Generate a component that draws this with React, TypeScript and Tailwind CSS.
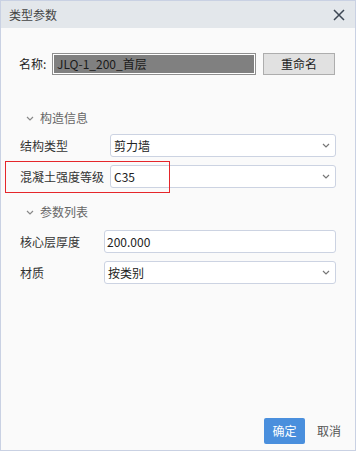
import React from "react";

const font = { fontFamily: '"Noto Sans CJK SC", "Noto Sans", sans-serif' };

function Chevron({ className = "" }: { className?: string }) {
  return (
    <svg width="8" height="5" viewBox="0 0 8 5" className={className} fill="none">
      <path d="M1 1l3 3 3-3" stroke="currentColor" strokeWidth="1.2" />
    </svg>
  );
}

function Select({ value, left }: { value: string; left: string }) {
  return (
    <div
      className={`${left} flex-1 h-[23px] bg-white border border-[#ccd3e2] rounded-[3px] flex items-center justify-between pl-[3px] pr-[5px] text-[12px] text-[#222]`}
    >
      <span>{value}</span>
      <Chevron className="text-[#777]" />
    </div>
  );
}

function SectionHeader({ title }: { title: string }) {
  return (
    <div className="flex items-center h-[16px] pl-[25px] text-[12px] text-[#666]">
      <Chevron className="text-[#888] mr-[6px]" />
      <span>{title}</span>
    </div>
  );
}

export default function App() {
  return (
    <div
      style={font}
      className="w-[356px] h-[451px] border border-[#c9d1e3] flex flex-col bg-[#fafafa]"
    >
      {/* title bar */}
      <div className="h-[27px] bg-[#e3e7eb] flex items-center justify-between pl-[8px] pr-[10px]">
        <span className="text-[12px] text-[#444]">类型参数</span>
        <svg width="12" height="12" viewBox="0 0 12 12" fill="none">
          <path d="M1 1l10 10M11 1L1 11" stroke="#3d4754" strokeWidth="1.5" />
        </svg>
      </div>

      <div className="flex-1 flex flex-col">
        {/* name row */}
        <div className="flex items-center mt-[25px] pl-[18px]">
          <span className="w-[33px] text-[12px] text-[#222]">名称:</span>
          <div className="w-[204px] h-[22px] bg-[#808080] border border-[#8f8f8f] shadow-[inset_0_0_0_1px_#ffffff] flex items-center pl-[4px] text-[12px] text-[#1a1a1a]">
            JLQ-1_200_首层
          </div>
          <button className="ml-[7px] w-[72px] h-[22px] bg-[#e1e1e1] border border-[#adadad] text-[12px] text-[#222]">
            重命名
          </button>
        </div>

        <div className="mt-[35px]">
          <SectionHeader title="构造信息" />
        </div>

        <div className="flex items-center mt-[8px] pl-[19px] pr-[19px]">
          <span className="w-[90px] text-[12px] text-[#333]">结构类型</span>
          <Select value="剪力墙" left="" />
        </div>

        <div className="relative flex items-center mt-[8px] pl-[19px] pr-[19px]">
          <span className="w-[90px] text-[12px] text-[#333]">混凝土强度等级</span>
          <Select value="C35" left="" />
          <div className="absolute left-[4px] top-[-4px] w-[165px] h-[32px] border border-[#e5262b] pointer-events-none" />
        </div>

        <div className="mt-[16px]">
          <SectionHeader title="参数列表" />
        </div>

        <div className="flex items-center mt-[10px] pl-[19px] pr-[19px]">
          <span className="w-[84px] text-[12px] text-[#333]">核心层厚度</span>
          <div className="flex-1 h-[23px] bg-white border border-[#ccd3e2] rounded-[3px] flex items-center pl-[2px] text-[12px] text-[#222]">
            200.000
          </div>
        </div>

        <div className="flex items-center mt-[8px] pl-[19px] pr-[19px]">
          <span className="w-[84px] text-[12px] text-[#333]">材质</span>
          <Select value="按类别" left="" />
        </div>

        <div className="flex-1" />

        {/* footer */}
        <div className="flex items-center justify-end gap-[12px] pr-[14px] mb-[6px]">
          <button className="w-[41px] h-[26px] bg-[#4a8fdd] rounded-[2px] text-[12px] text-white">
            确定
          </button>
          <span className="text-[12px] text-[#555]">取消</span>
        </div>
      </div>
    </div>
  );
}
